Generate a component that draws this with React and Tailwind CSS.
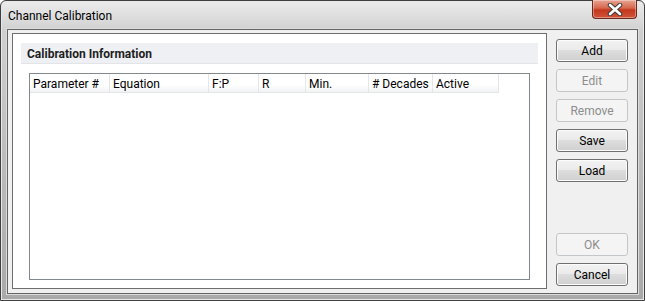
import React from 'react';

const font = { fontFamily: 'Roboto, "Noto Sans", sans-serif' };

const columns = [
  { label: 'Parameter #', w: 'w-[80px]' },
  { label: 'Equation', w: 'w-[99px]' },
  { label: 'F:P', w: 'w-[50px]' },
  { label: 'R', w: 'w-[47px]' },
  { label: 'Min.', w: 'w-[63px]' },
  { label: '# Decades', w: 'w-[64px]' },
  { label: 'Active', w: 'w-[66px]' },
];

function DialogButton({ children, disabled }) {
  if (disabled) {
    return (
      <button className="flex h-[23px] w-[72px] items-center justify-center rounded-[3px] border border-[#c4c7ca] bg-[#f4f4f4] pt-px text-[12px] text-[#8d8d8d]">
        {children}
      </button>
    );
  }
  return (
    <button className="flex h-[23px] w-[72px] items-center justify-center rounded-[3px] border border-[#707070] bg-[linear-gradient(#f2f2f2_0%,#ebebeb_45%,#dddddd_50%,#cfcfcf_100%)] pt-px text-[12px] text-black shadow-[inset_0_0_0_1px_#fcfcfc]">
      {children}
    </button>
  );
}

function CloseButton() {
  return (
    <div className="flex h-[19px] w-[45px] items-center justify-center rounded-b-[4px] border border-t-0 border-[#6b2a20] bg-[linear-gradient(#e8a493_0%,#d6674e_45%,#c4381d_55%,#d2533a_100%)] shadow-[inset_0_0_0_1px_rgba(255,255,255,0.35)]">
      <svg width="16" height="13" viewBox="0 0 16 13">
        <path d="M3 2 L13 11 M13 2 L3 11" stroke="#3a3a3a" strokeWidth="4.5" strokeLinecap="round" />
        <path d="M3 2 L13 11 M13 2 L3 11" stroke="#ffffff" strokeWidth="2.6" strokeLinecap="round" />
      </svg>
    </div>
  );
}

export default function App() {
  return (
    <div style={font} className="h-[301px] w-[645px] bg-white">
      <div className="flex h-full w-full flex-col rounded-t-[6px] border border-[#3f3f3f] bg-[linear-gradient(#ececec_0%,#d0d0d0_10%,#bdbdbd_50%,#a9a9a9_100%)] px-[6px] pb-[6px] shadow-[inset_0_0_0_1px_#e8e8e8]">
        <div className="flex h-[28px] shrink-0 items-start justify-between">
          <span className="mt-[7px] pl-[1px] text-[12px] leading-[16px] text-black">Channel Calibration</span>
          <div className="-mt-px mr-[1px]">
            <CloseButton />
          </div>
        </div>
        <div className="flex min-h-0 flex-1 border border-[#646464] bg-[#f0f0f0] pl-[4px] pt-[3px] pb-[4px] pr-[8px] shadow-[0_0_0_1px_#dcdcdc]">
          <div className="flex w-[535px] flex-col border border-[#6f6f6f] bg-white px-[8px] pt-[9px] pb-[8px]">
            <div className="flex h-[21px] shrink-0 items-center border-b border-[#e2e4e8] bg-[#eef0f3] pl-[6px] pt-[1px] text-[12px] font-bold text-[#1e1e1e]">
              Calibration Information
            </div>
            <div className="mx-[8px] mt-[9px] flex min-h-0 flex-1 flex-col border border-[#828790] bg-white">
              <div className="flex h-[19px] shrink-0">
                {columns.map((c) => (
                  <div
                    key={c.label}
                    className={`${c.w} flex items-center border-r border-b border-[#e5e5e5] bg-[linear-gradient(#ffffff_0%,#ffffff_60%,#f2f3f5_100%)] pl-[3px] pt-[2px] text-[12px] text-black`}
                  >
                    {c.label}
                  </div>
                ))}
              </div>
            </div>
          </div>
          <div className="ml-[9px] flex flex-col pt-[6px]">
            <div className="flex flex-col gap-[7px]">
              <DialogButton>Add</DialogButton>
              <DialogButton disabled>Edit</DialogButton>
              <DialogButton disabled>Remove</DialogButton>
              <DialogButton>Save</DialogButton>
              <DialogButton>Load</DialogButton>
            </div>
            <div className="mt-auto flex flex-col gap-[7px] pb-[3px]">
              <DialogButton disabled>OK</DialogButton>
              <DialogButton>Cancel</DialogButton>
            </div>
          </div>
        </div>
      </div>
    </div>
  );
}
